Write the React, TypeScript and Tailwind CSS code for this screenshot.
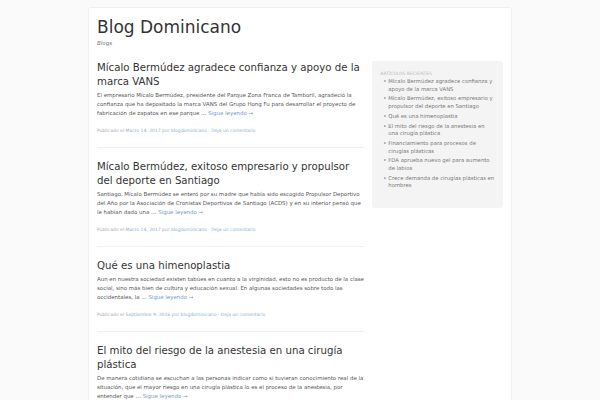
const posts = [
  {
    title: "Mícalo Bermúdez agradece confianza y apoyo de la marca VANS",
    excerpt:
      "El empresario Mícalo Bermúdez, presidente del Parque Zona Franca de Tamboril, agradeció la confianza que ha depositado la marca VANS del Grupo Hong Fu para desarrollar el proyecto de fabricación de zapatos en ese parque …",
    date: "Marzo 14, 2017",
  },
  {
    title: "Mícalo Bermúdez, exitoso empresario y propulsor del deporte en Santiago",
    excerpt:
      "Santiago. Mícalo Bermúdez se enteró por su madre que había sido escogido Propulsor Deportivo del Año por la Asociación de Cronistas Deportivos de Santiago (ACDS) y en su interior pensó que le habían dado una …",
    date: "Marzo 14, 2017",
  },
  {
    title: "Qué es una himenoplastia",
    excerpt:
      "Aun en nuestra sociedad existen tabúes en cuanto a la virginidad, esto no es producto de la clase social, sino más bien de cultura y educación sexual. En algunas sociedades sobre todo las occidentales, la …",
    date: "Septiembre 9, 2016",
  },
  {
    title: "El mito del riesgo de la anestesia en una cirugía plástica",
    excerpt:
      "De manera cotidiana se escuchan a las personas indicar como si tuvieran conocimiento real de la situación, que el mayor riesgo en una cirugía plástica lo es el proceso de la anestesia, por entender que …",
    date: "Marzo 10, 2016",
  },
];

const recent = [
  "Mícalo Bermúdez agradece confianza y apoyo de la marca VANS",
  "Mícalo Bermúdez, exitoso empresario y propulsor del deporte en Santiago",
  "Qué es una himenoplastia",
  "El mito del riesgo de la anestesia en una cirugía plástica",
  "Financiamiento para procesos de cirugías plásticas",
  "FDA aprueba nuevo gel para aumento de labios",
  "Crece demanda de cirugías plásticas en hombres",
];

export default function App() {
  return (
    <div className="h-screen overflow-hidden bg-[#fafafa] font-['DejaVu_Sans',sans-serif]">
      <div className="mx-auto w-[424px] pt-[7px]">
        <div className="bg-white border border-[#efefef] rounded-[3px] px-[8px] pt-[9px] min-h-[420px]">
          <header>
            <h1 className="text-[17px] leading-[20px] text-[#333]">Blog Dominicano</h1>
            <p className="mt-[2px] text-[5.5px] leading-[8px] italic text-[#777]">Blogs</p>
          </header>
          <div className="flex gap-[8px] mt-[14px]">
            <main className="w-[268px]">
              {posts.map((p, i) => (
                <article key={i} className="border-b border-[#f0f0f0] pb-[12.5px] mb-[12.5px]">
                  <h2 className="text-[10.2px] leading-[14px] text-[#333]">{p.title}</h2>
                  <p className="mt-[1.5px] text-[5.45px] leading-[9.2px] text-[#555]">
                    {p.excerpt} <span className="text-[#6f9bc9]">Sigue leyendo →</span>
                  </p>
                  <p className="mt-[9px] text-[4.5px] leading-[7px] text-[#aaa]">
                    Publicado el <span className="text-[#8aaed2]">{p.date}</span> por{" "}
                    <span className="text-[#8aaed2]">blogdominicano</span> ·{" "}
                    <span className="text-[#8aaed2]">Deja un comentario</span>
                  </p>
                </article>
              ))}
            </main>
            <aside className="w-[131px] self-start bg-[#f4f4f4] rounded-[3px] px-[8px] pt-[8.5px] pb-[18px]">
              <h3 className="text-[4.5px] leading-[7px] uppercase text-[#bbb]">Artículos recientes</h3>
              <ul className="mt-[1.5px] flex flex-col gap-[2.2px]">
                {recent.map((r, i) => (
                  <li key={i} className="flex text-[5.3px] leading-[7.6px] text-[#777]">
                    <span className="w-[8px] shrink-0 pl-[3px]">•</span>
                    <span>{r}</span>
                  </li>
                ))}
              </ul>
            </aside>
          </div>
        </div>
      </div>
    </div>
  );
}
